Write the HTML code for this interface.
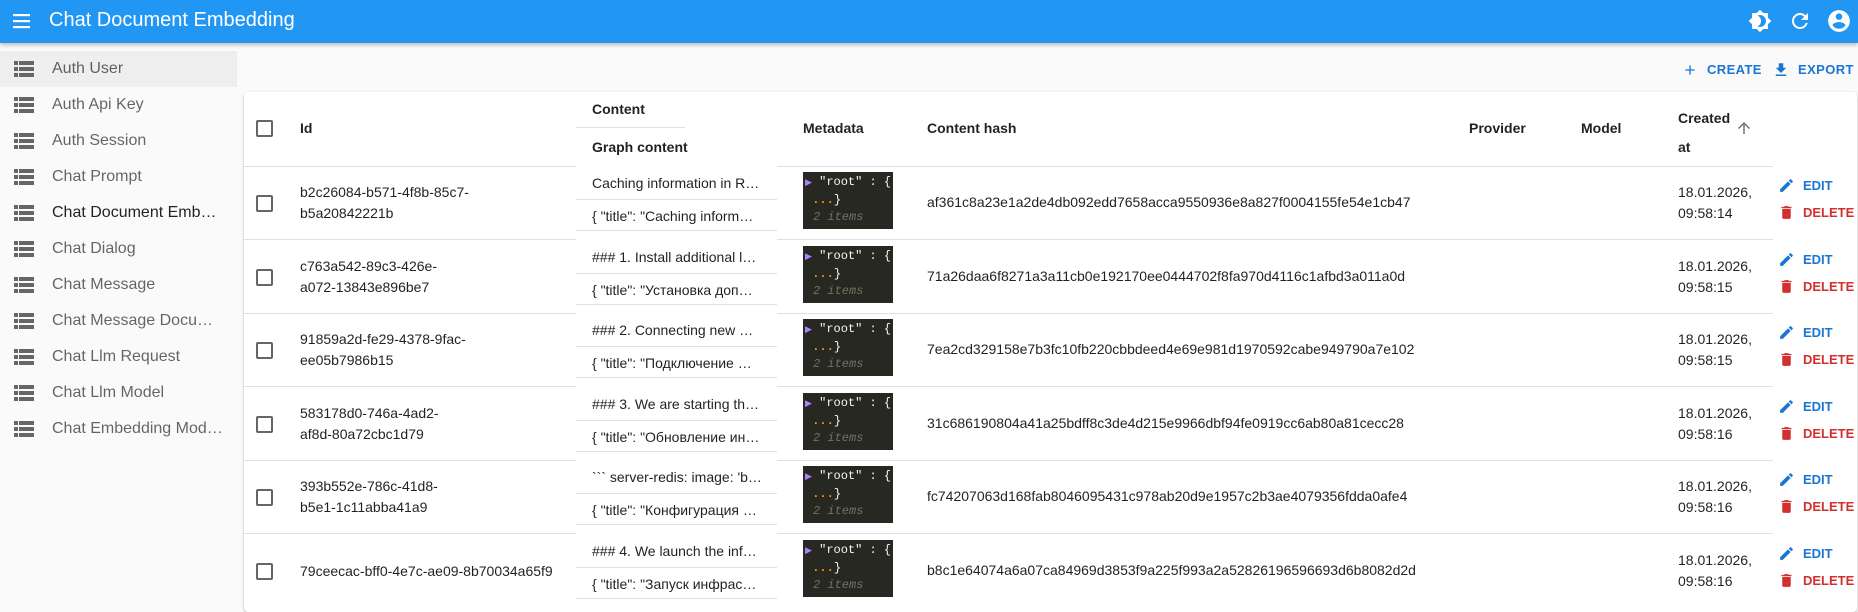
<!DOCTYPE html>
<html><head><meta charset="utf-8"><style>
*{box-sizing:border-box;margin:0;padding:0}
body{width:1858px;height:604px;overflow:hidden;background:#fafafa;font-family:"Liberation Sans",Arial,sans-serif;color:rgba(0,0,0,.87);position:relative}
.bar{position:absolute;left:0;top:0;width:1858px;height:43px;background:#2196f3;box-shadow:0 2px 4px rgba(0,0,0,.25);z-index:5}
.bar .t{position:absolute;left:49px;top:9px;color:#fff;font-size:20px}
.side{position:absolute;left:0;top:51px;width:237px}
.si{height:36px;position:relative;font-size:16px;color:rgba(0,0,0,.6);white-space:nowrap}
.si.sel{background:#eee}
.si.cur{color:rgba(0,0,0,.87)}
.si span{position:absolute;left:52px;top:9px}
.si i{position:absolute;left:14px;top:10px;width:20px;height:16px;background:
linear-gradient(#666,#666) 0 0/4px 4px no-repeat,linear-gradient(#666,#666) 5px 0/15px 4px no-repeat,
linear-gradient(#666,#666) 0 6px/4px 4px no-repeat,linear-gradient(#666,#666) 5px 6px/15px 4px no-repeat,
linear-gradient(#666,#666) 0 12px/4px 4px no-repeat,linear-gradient(#666,#666) 5px 12px/15px 4px no-repeat}
.btn{position:absolute;top:62px;color:#1976d2;font-size:13px;font-weight:bold;letter-spacing:.4px}
.card{position:absolute;left:244px;top:92px;width:1613px;height:520px;background:#fff;border-radius:4px;box-shadow:0 1px 3px rgba(0,0,0,.2),0 1px 1px rgba(0,0,0,.14)}
.a{position:absolute;white-space:nowrap;font-size:14px;line-height:21px}
.h{font-weight:bold}
.line{position:absolute;height:1px;background:#e0e0e0}
.cb{position:absolute;width:17px;height:17px;border:2px solid #666;border-radius:2px}
.row{position:absolute;left:0;width:1858px;height:74px}
.meta{position:absolute;left:803px;top:6px;width:90px;height:57px;background:#272822;font-family:"Liberation Mono",monospace;font-size:12px;color:#f8f8f2;padding:2px 0 0 2px;line-height:17px;white-space:nowrap}
.meta .p{color:#ae81ff;font-size:9px}
.meta .o{color:#fd971f;font-weight:bold}
.meta .g{color:#75715e;font-style:italic;padding-left:8px}
.ed{color:#1976d2;font-size:13px;font-weight:bold}
.de{color:#d32f2f;font-size:13px;font-weight:bold}
.ic{position:absolute;left:1778px}
</style></head><body>
<div class="bar">
<svg style="position:absolute;left:12px;top:12px" width="20" height="18" viewBox="0 0 20 18"><rect x="1" y="2" width="17" height="2.2" fill="#fff"/><rect x="1" y="8" width="17" height="2.2" fill="#fff"/><rect x="1" y="14" width="17" height="2.2" fill="#fff"/></svg>
<div class="t">Chat Document Embedding</div>
<svg style="position:absolute;left:1748px;top:9px" width="24" height="24" viewBox="0 0 24 24"><path fill="#fff" d="M20 8.69V4h-4.69L12 .69 8.69 4H4v4.69L.69 12 4 15.31V20h4.69L12 23.31 15.31 20H20v-4.69L23.31 12 20 8.69zM12 18c-.89 0-1.74-.2-2.5-.55C11.56 16.5 13 14.42 13 12s-1.44-4.5-3.5-5.45C10.26 6.2 11.11 6 12 6c3.31 0 6 2.690 6 6s-2.69 6-6 6z"/></svg>
<svg style="position:absolute;left:1788px;top:9px" width="24" height="24" viewBox="0 0 24 24"><path fill="#fff" d="M17.65 6.35A7.958 7.958 0 0012 4c-4.420 0-7.99 3.58-7.99 8s3.57 8 7.99 8c3.73 0 6.84-2.55 7.73-6h-2.08A5.99 5.99 0 0112 18c-3.31 0-6-2.690-6-6s2.69-6 6-6c1.66 0 3.14.69 4.22 1.78L13 11h7V4l-2.35 2.35z"/></svg>
<svg style="position:absolute;left:1826px;top:8px" width="26" height="26" viewBox="0 0 24 24"><path fill="#fff" d="M12 2C6.48 2 2 6.48 2 12s4.48 10 10 10 10-4.48 10-10S17.52 2 12 2zm0 3c1.66 0 3 1.34 3 3s-1.34 3-3 3-3-1.34-3-3 1.34-3 3-3zm0 14.2a7.2 7.2 0 01-6-3.22c.03-1.99 4-3.08 6-3.08 1.99 0 5.97 1.09 6 3.08a7.2 7.2 0 01-6 3.22z"/></svg>
</div>

<div class="side">
<div class="si sel"><i></i><span>Auth User</span></div>
<div class="si"><i></i><span>Auth Api Key</span></div>
<div class="si"><i></i><span>Auth Session</span></div>
<div class="si"><i></i><span>Chat Prompt</span></div>
<div class="si cur"><i></i><span>Chat Document Emb…</span></div>
<div class="si"><i></i><span>Chat Dialog</span></div>
<div class="si"><i></i><span>Chat Message</span></div>
<div class="si"><i></i><span>Chat Message Docu…</span></div>
<div class="si"><i></i><span>Chat Llm Request</span></div>
<div class="si"><i></i><span>Chat Llm Model</span></div>
<div class="si"><i></i><span>Chat Embedding Mod…</span></div>
</div>

<svg style="position:absolute;left:1682px;top:62px" width="16" height="16" viewBox="0 0 24 24"><path fill="#1976d2" d="M19 13h-6v6h-2v-6H5v-2h6V5h2v6h6v2z"/></svg>
<div class="btn" style="left:1707px">CREATE</div>
<svg style="position:absolute;left:1772px;top:61px" width="18" height="18" viewBox="0 0 24 24"><path fill="#1976d2" d="M19 9h-4V3H9v6H5l7 7 7-7zM5 18v2h14v-2H5z"/></svg>
<div class="btn" style="left:1798px">EXPORT</div>

<div class="card"></div>

<div class="cb" style="left:256px;top:120px"></div>
<div class="a h" style="left:300px;top:118px">Id</div>
<div class="a h" style="left:592px;top:99px">Content</div>
<div class="line" style="left:576px;width:109px;top:127px"></div>
<div class="a h" style="left:592px;top:137px">Graph content</div>
<div class="a h" style="left:803px;top:118px">Metadata</div>
<div class="a h" style="left:927px;top:118px">Content hash</div>
<div class="a h" style="left:1469px;top:118px">Provider</div>
<div class="a h" style="left:1581px;top:118px">Model</div>
<div class="a h" style="left:1678px;top:104px;line-height:29px">Created<br>at</div>
<svg style="position:absolute;left:1735px;top:119px" width="18" height="18" viewBox="0 0 24 24"><path fill="#757575" d="M4 12l1.41 1.41L11 7.830V20h2V7.83l5.58 5.59L20 12l-8-8-8 8z"/></svg>
<div class="line" style="left:244px;width:332px;top:166px"></div>
<div class="line" style="left:777px;width:996px;top:166px"></div>

<div class="row" style="top:166px">
<div class="cb" style="left:256px;top:29px"></div>
<div class="a" style="left:300px;top:16px">b2c26084-b571-4f8b-85c7-<br>b5a20842221b</div>
<div class="a" style="left:592px;top:7px">Caching information in R…</div>
<div class="line" style="left:576px;width:201px;top:33px"></div>
<div class="a" style="left:592px;top:40px">{ "title": "Caching inform…</div>
<div class="line" style="left:576px;width:201px;top:64px"></div>
<div class="meta"><span class="p">▶</span> "root" : {<br>&nbsp;<span class="o">...</span>}<br><span class="g">2 items</span></div>
<div class="a" style="left:927px;top:26px">af361c8a23e1a2de4db092edd7658acca9550936e8a827f0004155fe54e1cb47</div>
<div class="a" style="left:1678px;top:16px">18.01.2026,<br>09:58:14</div>
<svg class="ic" style="top:11px" width="17" height="17" viewBox="0 0 24 24"><path fill="#1976d2" d="M3 17.25V21h3.75L17.81 9.94l-3.75-3.75L3 17.25zM20.71 7.04a1 1 0 000-1.41l-2.34-2.34a1 1 0 00-1.41 0l-1.83 1.83 3.75 3.75 1.83-1.83z"/></svg>
<div class="a ed" style="left:1803px;top:9px">EDIT</div>
<svg class="ic" style="top:38px" width="17" height="17" viewBox="0 0 24 24"><path fill="#d32f2f" d="M6 19c0 1.1.9 2 2 2h8c1.1 0 2-.9 2-2V7H6v12zM19 4h-3.5l-1-1h-5l-1 1H5v2h14V4z"/></svg>
<div class="a de" style="left:1803px;top:36px">DELETE</div>
<div class="line" style="left:244px;width:332px;top:73px"></div>
<div class="line" style="left:777px;width:996px;top:73px"></div>
</div>

<div class="row" style="top:240px">
<div class="cb" style="left:256px;top:29px"></div>
<div class="a" style="left:300px;top:16px">c763a542-89c3-426e-<br>a072-13843e896be7</div>
<div class="a" style="left:592px;top:7px">### 1. Install additional l…</div>
<div class="line" style="left:576px;width:201px;top:33px"></div>
<div class="a" style="left:592px;top:40px">{ "title": "Установка доп…</div>
<div class="line" style="left:576px;width:201px;top:64px"></div>
<div class="meta"><span class="p">▶</span> "root" : {<br>&nbsp;<span class="o">...</span>}<br><span class="g">2 items</span></div>
<div class="a" style="left:927px;top:26px">71a26daa6f8271a3a11cb0e192170ee0444702f8fa970d4116c1afbd3a011a0d</div>
<div class="a" style="left:1678px;top:16px">18.01.2026,<br>09:58:15</div>
<svg class="ic" style="top:11px" width="17" height="17" viewBox="0 0 24 24"><path fill="#1976d2" d="M3 17.25V21h3.75L17.81 9.94l-3.75-3.75L3 17.25zM20.71 7.04a1 1 0 000-1.41l-2.34-2.34a1 1 0 00-1.41 0l-1.83 1.83 3.75 3.75 1.83-1.83z"/></svg>
<div class="a ed" style="left:1803px;top:9px">EDIT</div>
<svg class="ic" style="top:38px" width="17" height="17" viewBox="0 0 24 24"><path fill="#d32f2f" d="M6 19c0 1.1.9 2 2 2h8c1.1 0 2-.9 2-2V7H6v12zM19 4h-3.5l-1-1h-5l-1 1H5v2h14V4z"/></svg>
<div class="a de" style="left:1803px;top:36px">DELETE</div>
<div class="line" style="left:244px;width:332px;top:73px"></div>
<div class="line" style="left:777px;width:996px;top:73px"></div>
</div>

<div class="row" style="top:313px">
<div class="cb" style="left:256px;top:29px"></div>
<div class="a" style="left:300px;top:16px">91859a2d-fe29-4378-9fac-<br>ee05b7986b15</div>
<div class="a" style="left:592px;top:7px">### 2. Connecting new …</div>
<div class="line" style="left:576px;width:201px;top:33px"></div>
<div class="a" style="left:592px;top:40px">{ "title": "Подключение …</div>
<div class="line" style="left:576px;width:201px;top:64px"></div>
<div class="meta"><span class="p">▶</span> "root" : {<br>&nbsp;<span class="o">...</span>}<br><span class="g">2 items</span></div>
<div class="a" style="left:927px;top:26px">7ea2cd329158e7b3fc10fb220cbbdeed4e69e981d1970592cabe949790a7e102</div>
<div class="a" style="left:1678px;top:16px">18.01.2026,<br>09:58:15</div>
<svg class="ic" style="top:11px" width="17" height="17" viewBox="0 0 24 24"><path fill="#1976d2" d="M3 17.25V21h3.75L17.81 9.94l-3.75-3.75L3 17.25zM20.71 7.04a1 1 0 000-1.41l-2.34-2.34a1 1 0 00-1.41 0l-1.83 1.83 3.75 3.75 1.83-1.83z"/></svg>
<div class="a ed" style="left:1803px;top:9px">EDIT</div>
<svg class="ic" style="top:38px" width="17" height="17" viewBox="0 0 24 24"><path fill="#d32f2f" d="M6 19c0 1.1.9 2 2 2h8c1.1 0 2-.9 2-2V7H6v12zM19 4h-3.5l-1-1h-5l-1 1H5v2h14V4z"/></svg>
<div class="a de" style="left:1803px;top:36px">DELETE</div>
<div class="line" style="left:244px;width:332px;top:73px"></div>
<div class="line" style="left:777px;width:996px;top:73px"></div>
</div>

<div class="row" style="top:387px">
<div class="cb" style="left:256px;top:29px"></div>
<div class="a" style="left:300px;top:16px">583178d0-746a-4ad2-<br>af8d-80a72cbc1d79</div>
<div class="a" style="left:592px;top:7px">### 3. We are starting th…</div>
<div class="line" style="left:576px;width:201px;top:33px"></div>
<div class="a" style="left:592px;top:40px">{ "title": "Обновление ин…</div>
<div class="line" style="left:576px;width:201px;top:64px"></div>
<div class="meta"><span class="p">▶</span> "root" : {<br>&nbsp;<span class="o">...</span>}<br><span class="g">2 items</span></div>
<div class="a" style="left:927px;top:26px">31c686190804a41a25bdff8c3de4d215e9966dbf94fe0919cc6ab80a81cecc28</div>
<div class="a" style="left:1678px;top:16px">18.01.2026,<br>09:58:16</div>
<svg class="ic" style="top:11px" width="17" height="17" viewBox="0 0 24 24"><path fill="#1976d2" d="M3 17.25V21h3.75L17.81 9.94l-3.75-3.75L3 17.25zM20.71 7.04a1 1 0 000-1.41l-2.34-2.34a1 1 0 00-1.41 0l-1.83 1.83 3.75 3.75 1.83-1.83z"/></svg>
<div class="a ed" style="left:1803px;top:9px">EDIT</div>
<svg class="ic" style="top:38px" width="17" height="17" viewBox="0 0 24 24"><path fill="#d32f2f" d="M6 19c0 1.1.9 2 2 2h8c1.1 0 2-.9 2-2V7H6v12zM19 4h-3.5l-1-1h-5l-1 1H5v2h14V4z"/></svg>
<div class="a de" style="left:1803px;top:36px">DELETE</div>
<div class="line" style="left:244px;width:332px;top:73px"></div>
<div class="line" style="left:777px;width:996px;top:73px"></div>
</div>

<div class="row" style="top:460px">
<div class="cb" style="left:256px;top:29px"></div>
<div class="a" style="left:300px;top:16px">393b552e-786c-41d8-<br>b5e1-1c11abba41a9</div>
<div class="a" style="left:592px;top:7px">&#96;&#96;&#96; server-redis: image: 'b…</div>
<div class="line" style="left:576px;width:201px;top:33px"></div>
<div class="a" style="left:592px;top:40px">{ "title": "Конфигурация …</div>
<div class="line" style="left:576px;width:201px;top:64px"></div>
<div class="meta"><span class="p">▶</span> "root" : {<br>&nbsp;<span class="o">...</span>}<br><span class="g">2 items</span></div>
<div class="a" style="left:927px;top:26px">fc74207063d168fab8046095431c978ab20d9e1957c2b3ae4079356fdda0afe4</div>
<div class="a" style="left:1678px;top:16px">18.01.2026,<br>09:58:16</div>
<svg class="ic" style="top:11px" width="17" height="17" viewBox="0 0 24 24"><path fill="#1976d2" d="M3 17.25V21h3.75L17.81 9.94l-3.75-3.75L3 17.25zM20.71 7.04a1 1 0 000-1.41l-2.34-2.34a1 1 0 00-1.41 0l-1.83 1.83 3.75 3.75 1.83-1.83z"/></svg>
<div class="a ed" style="left:1803px;top:9px">EDIT</div>
<svg class="ic" style="top:38px" width="17" height="17" viewBox="0 0 24 24"><path fill="#d32f2f" d="M6 19c0 1.1.9 2 2 2h8c1.1 0 2-.9 2-2V7H6v12zM19 4h-3.5l-1-1h-5l-1 1H5v2h14V4z"/></svg>
<div class="a de" style="left:1803px;top:36px">DELETE</div>
<div class="line" style="left:244px;width:332px;top:73px"></div>
<div class="line" style="left:777px;width:996px;top:73px"></div>
</div>

<div class="row" style="top:534px">
<div class="cb" style="left:256px;top:29px"></div>
<div class="a" style="left:300px;top:27px">79ceecac-bff0-4e7c-ae09-8b70034a65f9</div>
<div class="a" style="left:592px;top:7px">### 4. We launch the inf…</div>
<div class="line" style="left:576px;width:201px;top:33px"></div>
<div class="a" style="left:592px;top:40px">{ "title": "Запуск инфрас…</div>
<div class="line" style="left:576px;width:201px;top:64px"></div>
<div class="meta"><span class="p">▶</span> "root" : {<br>&nbsp;<span class="o">...</span>}<br><span class="g">2 items</span></div>
<div class="a" style="left:927px;top:26px">b8c1e64074a6a07ca84969d3853f9a225f993a2a52826196596693d6b8082d2d</div>
<div class="a" style="left:1678px;top:16px">18.01.2026,<br>09:58:16</div>
<svg class="ic" style="top:11px" width="17" height="17" viewBox="0 0 24 24"><path fill="#1976d2" d="M3 17.25V21h3.75L17.81 9.94l-3.75-3.75L3 17.25zM20.71 7.04a1 1 0 000-1.41l-2.34-2.34a1 1 0 00-1.41 0l-1.83 1.83 3.75 3.75 1.83-1.83z"/></svg>
<div class="a ed" style="left:1803px;top:9px">EDIT</div>
<svg class="ic" style="top:38px" width="17" height="17" viewBox="0 0 24 24"><path fill="#d32f2f" d="M6 19c0 1.1.9 2 2 2h8c1.1 0 2-.9 2-2V7H6v12zM19 4h-3.5l-1-1h-5l-1 1H5v2h14V4z"/></svg>
<div class="a de" style="left:1803px;top:36px">DELETE</div>
</div>
</body></html>
